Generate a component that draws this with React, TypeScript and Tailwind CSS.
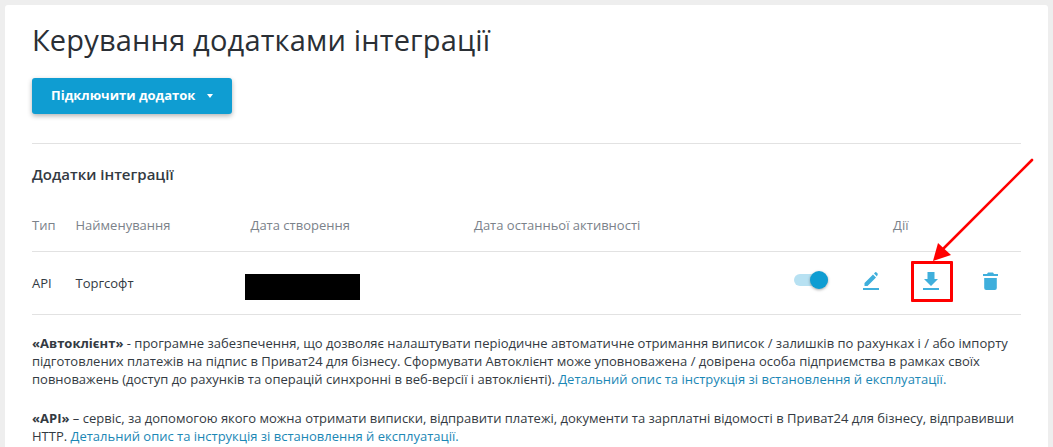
export default function App() {
  return (
    <div className="relative h-[447px] w-[1053px] overflow-hidden bg-[#eeeeee] pl-[5px] pt-[5px] font-['Open_Sans',sans-serif] text-[#333a42]">
      <div className="h-[442px] w-[1043px] rounded-t-[3px] bg-white pl-[27px] pr-[27px]">
        <h1 className="pt-[16px] text-[29px] leading-[38px] tracking-[0.18px] text-[#2a2f35]">Керування додатками інтеграції</h1>
        <button className="mt-[19px] flex h-[36px] w-[200px] items-center rounded-[3px] bg-[#0f9dd2] pl-[19px] text-[13px] font-bold text-white shadow-[0_2px_5px_rgba(0,0,0,0.3)]">
          Підключити додаток
          <span className="ml-[12px] h-0 w-0 border-x-[3.5px] border-t-[4px] border-x-transparent border-t-white" />
        </button>
        <div className="mt-[29px] border-t border-[#e2e2e2]" />
        <h2 className="mt-[21px] text-[15px] font-semibold leading-[19px] text-[#333a42]">Додатки інтеграції</h2>
        <div className="mt-[24px] flex h-[44px] items-start border-b border-[#e2e2e2] pt-[8px] text-[13px] leading-[18px] text-[#7b828a]">
          <span className="w-[43.5px]">Тип</span>
          <span className="w-[175px]">Найменування</span>
          <span className="w-[223.5px]">Дата створення</span>
          <span className="w-[419px]">Дата останньої активності</span>
          <span>Дії</span>
        </div>
        <div className="flex h-[63px] items-center border-b border-[#e2e2e2] text-[13px]">
          <span className="mt-[2px] w-[43.5px]">API</span>
          <span className="mt-[2px] w-[169.5px]">Торгсофт</span>
          <div className="mt-[8px] h-[26px] w-[115px] bg-black" />
          <div className="mb-[6px] ml-[434px] flex items-center">
            <div className="relative h-[12px] w-[34px] shrink-0 rounded-full bg-[#b7e1f2]">
              <div className="absolute right-0 top-[-3px] h-[18px] w-[18px] rounded-full bg-[#0f9dd2] shadow-[0_1px_3px_rgba(0,0,0,0.35)]" />
            </div>
            <svg className="ml-[35px] block shrink-0 translate-y-[1px]" width="16" height="18" viewBox="0 0 16 18" fill="#3fafdc">
              <path d="M1.5 14 V11 L10 2.5 L13 5.5 L4.5 14 Z M11 1.5 L12.2 .3 Q12.8 -.1 13.3 .3 L14.6 1.6 Q15 2.1 14.6 2.7 L13.9 4.5 Z" />
              <rect x="0" y="16" width="16" height="2" />
            </svg>
            <svg className="ml-[44px] block shrink-0 translate-y-[1px]" width="16" height="18" viewBox="0 0 16 18" fill="#3fafdc">
              <path d="M4.5 0 H11.5 V7 H15 L8 14 L1 7 H4.5 Z" />
              <rect x="0" y="16" width="16" height="2" />
            </svg>
            <svg className="ml-[44px] block shrink-0 translate-y-[1px]" width="15" height="18" viewBox="0 0 15 18" fill="#3fafdc">
              <path d="M1.2 6 H13.8 V16 Q13.8 18 11.8 18 H3.2 Q1.2 18 1.2 16 Z M0 2 H4 L5 .5 H10 L11 2 H15 V4 H0 Z" />
            </svg>
          </div>
        </div>
        <p className="mt-[19px] w-[995px] text-[13px] leading-[18px]">
          <b>«Автоклієнт»</b> - програмне забезпечення, що дозволяє налаштувати періодичне автоматичне отримання виписок / залишків по рахунках і / або імпорту<br />
          підготовлених платежів на підпис в Приват24 для бізнесу. Сформувати Автоклієнт може уповноважена / довірена особа підприємства в рамках своїх<br />
          повноважень (доступ до рахунків та операцій синхронні в веб-версії і автоклієнті). <a className="text-[#1b87b5]">Детальний опис та інструкція зі встановлення й експлуатації.</a>
        </p>
        <p className="mt-[21px] w-[995px] text-[13px] leading-[18px]">
          <b>«API»</b> – сервіс, за допомогою якого можна отримати виписки, відправити платежі, документи та зарплатні відомості в Приват24 для бізнесу, відправивши<br />
          HTTP. <a className="text-[#1b87b5]">Детальний опис та інструкція зі встановлення й експлуатації.</a>
        </p>
      </div>
      <div className="absolute left-[911px] top-[261px] h-[41px] w-[42px] rounded-[1px] border-[3px] border-[#ff0000]" />
      <svg className="absolute left-[925px] top-[150px]" width="115" height="115" viewBox="0 0 115 115">
        <line x1="107" y1="10" x2="15" y2="102" stroke="#ff0000" strokeWidth="2.6" strokeLinecap="round" />
        <path d="M8 111 L13 93 L26 105 Z" fill="#ff0000" />
      </svg>
    </div>
  );
}
